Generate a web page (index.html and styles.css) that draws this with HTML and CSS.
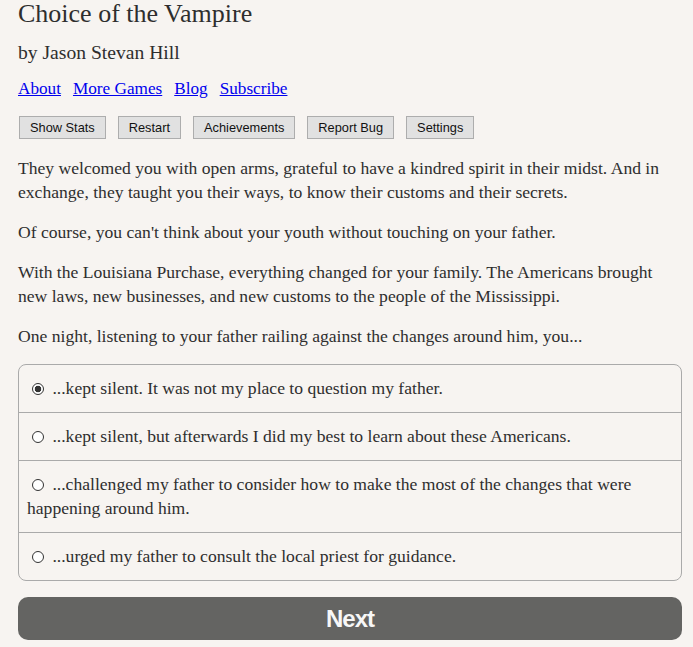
FILE: index.html
```html
<!DOCTYPE html>
<html lang="en">
<head>
<meta charset="utf-8">
<title>Choice of the Vampire</title>
<link rel="stylesheet" href="styles.css">
</head>
<body>
<div class="container">
  <h1 class="title">Choice of the Vampire</h1>
  <h2 class="byline">by Jason Stevan Hill</h2>
  <nav class="links">
    <a href="#">About</a>
    <a href="#">More Games</a>
    <a href="#">Blog</a>
    <a href="#">Subscribe</a>
  </nav>
  <div class="buttons">
    <button class="btn">Show Stats</button>
    <button class="btn">Restart</button>
    <button class="btn">Achievements</button>
    <button class="btn">Report Bug</button>
    <button class="btn">Settings</button>
  </div>
  <div class="text">
    <p>They welcomed you with open arms, grateful to have a kindred spirit in their midst. And in exchange, they taught you their ways, to know their customs and their secrets.</p>
    <p>Of course, you can't think about your youth without touching on your father.</p>
    <p>With the Louisiana Purchase, everything changed for your family. The Americans brought new laws, new businesses, and new customs to the people of the Mississippi.</p>
    <p>One night, listening to your father railing against the changes around him, you...</p>
  </div>
  <form class="choice">
    <label class="option"><input type="radio" name="c" checked> ...kept silent. It was not my place to question my father.</label>
    <label class="option"><input type="radio" name="c"> ...kept silent, but afterwards I did my best to learn about these Americans.</label>
    <label class="option"><input type="radio" name="c"> ...challenged my father to consider how to make the most of the changes that were happening around him.</label>
    <label class="option"><input type="radio" name="c"> ...urged my father to consult the local priest for guidance.</label>
  </form>
  <button class="next">Next</button>
</div>
</body>
</html>
```
FILE: styles.css
```css
html, body {
  margin: 0;
  padding: 0;
  background: #f7f4f1;
}
body {
  font-family: "Liberation Serif", "Times New Roman", serif;
  color: #2e2e2e;
  font-size: 17.6px;
}
.container {
  width: 664px;
  margin-left: 18px;
}
.title {
  margin: 0;
  font-size: 26px;
  font-weight: normal;
  line-height: 28px;
}
.byline {
  margin: 13px 0 0;
  font-size: 19.6px;
  font-weight: normal;
  line-height: 24px;
}
.links {
  margin-top: 12px;
  line-height: 24px;
  display: flex;
  gap: 12px;
  font-size: 17.2px;
}
.links a {
  color: #0000ee;
  text-decoration: underline;
}
.buttons {
  margin-top: 15px;
  display: flex;
  gap: 12px;
  padding-left: 1px;
}
.btn {
  height: 23px;
  padding: 0 10px;
  font-family: "Liberation Sans", Arial, sans-serif;
  font-size: 12.8px;
  color: #111;
  background: #e1e1e1;
  border: 1px solid #adadad;
  border-radius: 0;
}
.text p {
  margin: 16px 0;
  line-height: 24px;
}
.text p:first-child {
  margin-top: 17px;
}
.choice {
  margin: 16px 0 0;
  border: 1px solid #aaa;
  border-radius: 8px;
  display: flex;
  flex-direction: column;
}
.option {
  display: block;
  padding: 11px 10px 12px 8px;
  line-height: 24px;
}
.option + .option {
  border-top: 1px solid #aaa;
}
.option input {
  appearance: none;
  -webkit-appearance: none;
  width: 12px;
  height: 12px;
  margin: 0 4px 0 5px;
  border: 1px solid #333;
  border-radius: 50%;
  background: #fff;
  vertical-align: -1px;
}
.option input:checked {
  background: radial-gradient(circle, #333 0 3px, #fff 3.6px);
}
.next {
  display: block;
  width: 100%;
  height: 43px;
  margin-top: 16px;
  border: none;
  border-radius: 10px;
  background: #646462;
  color: #f7f7f7;
  font-family: "Liberation Sans", Arial, sans-serif;
  font-weight: bold;
  font-size: 24px;
  letter-spacing: -1px;
}
```
